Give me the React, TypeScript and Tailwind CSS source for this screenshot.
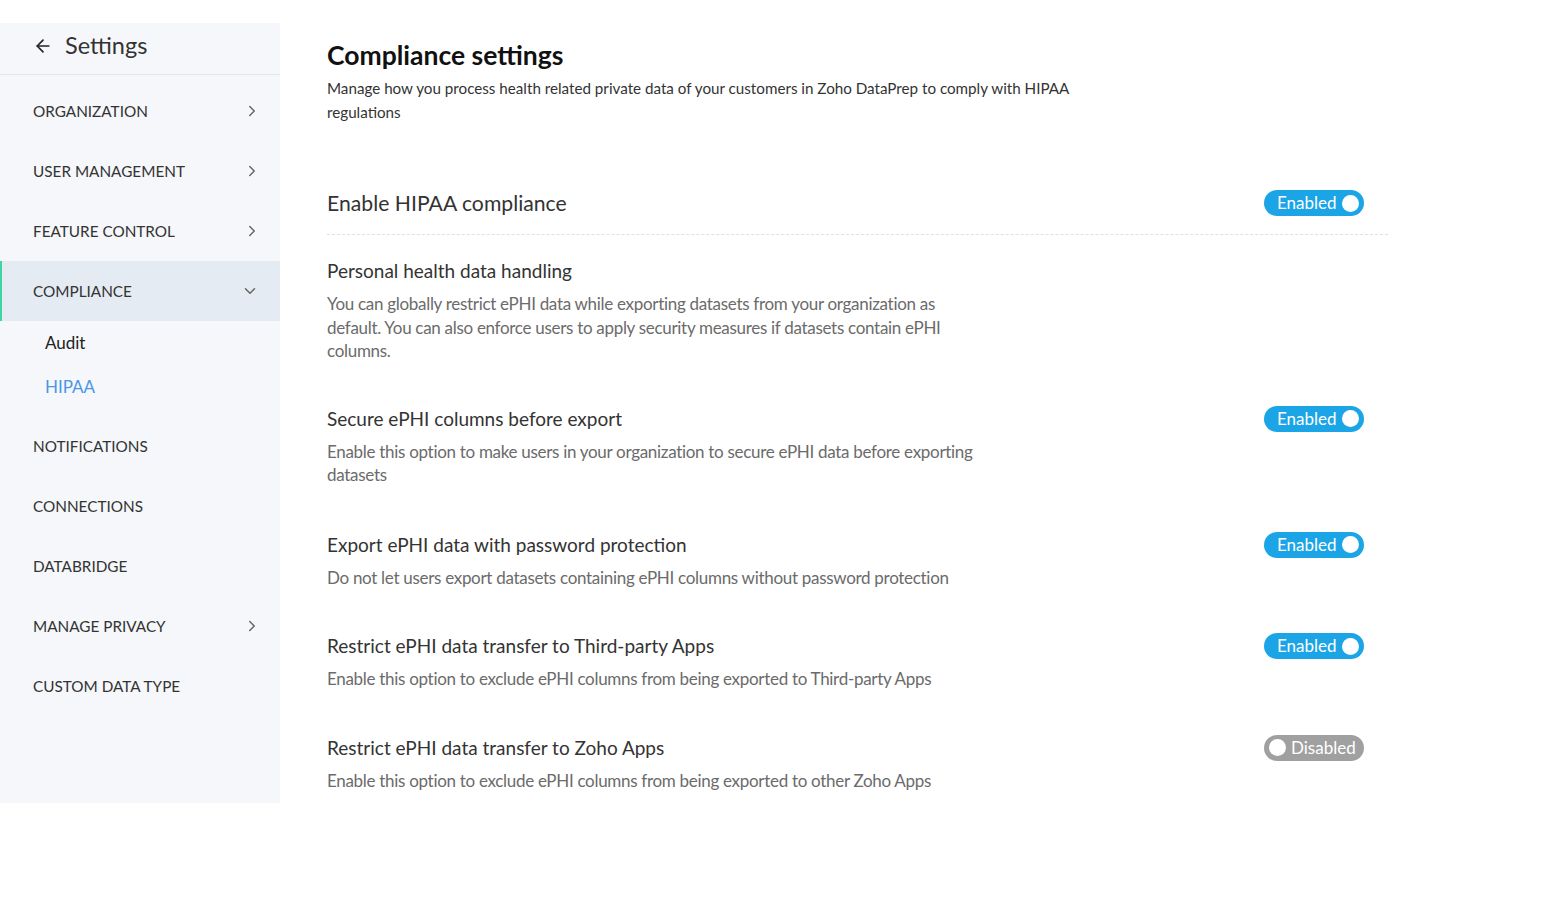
import React from 'react';
import { ArrowLeft, ChevronRight, ChevronDown } from 'lucide-react';

type NavItem = { label: string; chevron?: boolean; open?: boolean };

const navItems: NavItem[] = [
  { label: 'ORGANIZATION', chevron: true },
  { label: 'USER MANAGEMENT', chevron: true },
  { label: 'FEATURE CONTROL', chevron: true },
  { label: 'COMPLIANCE', chevron: true, open: true },
  { label: 'NOTIFICATIONS' },
  { label: 'CONNECTIONS' },
  { label: 'DATABRIDGE' },
  { label: 'MANAGE PRIVACY', chevron: true },
  { label: 'CUSTOM DATA TYPE' },
];

const Toggle: React.FC<{ on: boolean }> = ({ on }) =>
  on ? (
    <div className="flex h-[26px] w-[100px] items-center justify-between rounded-full bg-[#1ba5e6] pl-[13px] pr-[5px] text-[17px] text-white">
      <span>Enabled</span>
      <span className="h-[17px] w-[17px] rounded-full bg-white" />
    </div>
  ) : (
    <div className="flex h-[26px] w-[100px] items-center gap-[5px] rounded-full bg-[#a0a0a0] pl-[5px] text-[17px] text-white">
      <span className="h-[17px] w-[17px] rounded-full bg-white" />
      <span>Disabled</span>
    </div>
  );

const Option: React.FC<{ title: string; desc: string; on?: boolean; className?: string }> = ({ title, desc, on, className }) => (
  <div className={`flex items-start justify-between pr-6 ${className ?? ''}`}>
    <div className="w-[660px]">
      <div className="text-[19px] leading-[28px] text-[#333]">{title}</div>
      <p className="mt-[7px] text-[17px] leading-[23.5px] tracking-[-0.3px] text-[#6b6b6b]">{desc}</p>
    </div>
    {on !== undefined && (
      <div className="pt-[1px]">
        <Toggle on={on} />
      </div>
    )}
  </div>
);

export default function App() {
  return (
    <div className="flex min-h-[914px] bg-white font-['Lato',sans-serif] text-[#333]">
      {/* Sidebar */}
      <aside className="mt-[23px] h-[780px] w-[280px] shrink-0 bg-[#f5f7fa]">
        <div className="flex h-[52px] items-center gap-[12px] border-b border-[#e4e6ea] pb-[6px] pl-[33px]">
          <ArrowLeft size={20} strokeWidth={2} className="text-[#222]" />
          <span className="text-[23.5px] text-[#333]">Settings</span>
        </div>
        <nav className="pt-[6px]">
          {navItems.map(item => (
            <React.Fragment key={item.label}>
              <div
                className={`flex h-[60px] items-center justify-between pr-[19px] text-[15.3px] text-[#333] ${
                  item.open ? 'border-l-2 border-[#3dd6a3] bg-[#e5ebf3] pl-[31px]' : 'pl-[33px]'
                }`}
              >
                <span>{item.label}</span>
                {item.chevron &&
                  (item.open ? (
                    <ChevronDown size={18} strokeWidth={2} className="mr-[2px] text-[#666]" />
                  ) : (
                    <ChevronRight size={18} strokeWidth={2} className="text-[#666]" />
                  ))}
              </div>
              {item.open && (
                <div className="pb-[7px]">
                  <div className="flex h-[44px] items-center pl-[45px] text-[17px] text-[#222]">Audit</div>
                  <div className="flex h-[44px] items-center pl-[45px] text-[17px] text-[#4a95e6]">HIPAA</div>
                </div>
              )}
            </React.Fragment>
          ))}
        </nav>
      </aside>

      {/* Main */}
      <main className="flex-1 pl-[47px] pt-[37px]">
        <div className="w-[1061px]">
          <h1 className="text-[26.5px] font-bold leading-[36px] text-[#111]">Compliance settings</h1>
          <p className="mt-[4px] w-[770px] text-[15.2px] leading-[23.5px] text-[#333]">
            Manage how you process health related private data of your customers in Zoho DataPrep to comply with HIPAA regulations
          </p>

          <div className="mt-[64px] flex items-center justify-between border-b border-dashed border-[#e0e0e0] pb-[16px] pr-6">
            <span className="text-[21.2px] leading-[30px] text-[#333]">Enable HIPAA compliance</span>
            <Toggle on />
          </div>

          <Option
            className="mt-[22px]"
            title="Personal health data handling"
            desc="You can globally restrict ePHI data while exporting datasets from your organization as default. You can also enforce users to apply security measures if datasets contain ePHI columns."
          />
          <Option
            className="mt-[42px]"
            title="Secure ePHI columns before export"
            desc="Enable this option to make users in your organization to secure ePHI data before exporting datasets"
            on
          />
          <Option
            className="mt-[44px]"
            title="Export ePHI data with password protection"
            desc="Do not let users export datasets containing ePHI columns without password protection"
            on
          />
          <Option
            className="mt-[43px]"
            title="Restrict ePHI data transfer to Third-party Apps"
            desc="Enable this option to exclude ePHI columns from being exported to Third-party Apps"
            on
          />
          <Option
            className="mt-[43px]"
            title="Restrict ePHI data transfer to Zoho Apps"
            desc="Enable this option to exclude ePHI columns from being exported to other Zoho Apps"
            on={false}
          />
        </div>
      </main>
    </div>
  );
}
